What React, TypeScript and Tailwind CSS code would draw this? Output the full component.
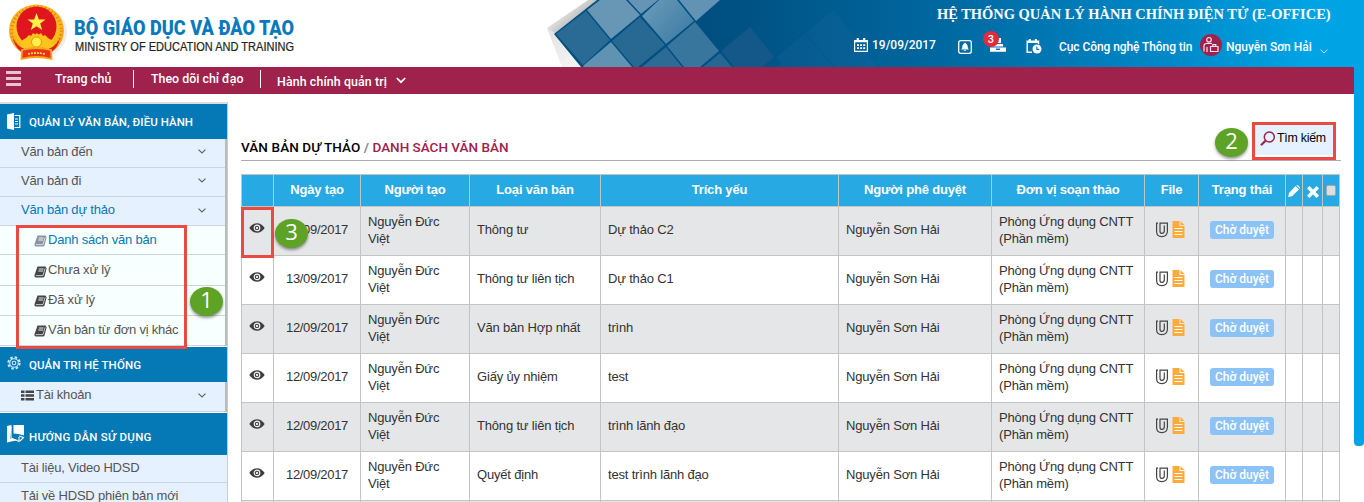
import React from "react";

const sans = "font-['Liberation_Sans',Arial,sans-serif]";
const roboto = "font-['Roboto','Liberation_Sans',sans-serif] font-medium";

function Emblem() {
  return (
    <svg width="58" height="58" viewBox="0 0 58 58" className="shrink-0">
      <defs>
        <radialGradient id="gold" cx="50%" cy="45%" r="60%">
          <stop offset="0.6" stopColor="#fdc51c" />
          <stop offset="1" stopColor="#f39a12" />
        </radialGradient>
      </defs>
      <ellipse cx="30" cy="28" rx="28" ry="26" fill="#d9d9d9" opacity="0.5" />
      <ellipse cx="27.5" cy="26.5" rx="27.5" ry="26" fill="url(#gold)" />
      <ellipse cx="27.5" cy="26.5" rx="24.8" ry="23.6" fill="none" stroke="#ee7d1a" strokeWidth="3" strokeDasharray="1.2 2.6" />
      <circle cx="27.5" cy="22.500" r="20" fill="#e0161f" />
      <path d="M27.500 9 29.800 15.500H36.500L31.200 19.600 33.200 26 27.500 22.200 21.800 26 23.800 19.600 18.500 15.500H25.200Z" fill="#fff04a" />
      <path d="M11 41q1-5 6-7l3-3 2 1 2-3 2.500 1.500 1-1.500 2.500 1.500 2-1.500 2 3 2-1 3 3q5 2 6 7l-7 7H18Z" fill="#fcc41d" />
      <circle cx="27.500" cy="38" r="5" fill="#fff04a" stroke="#f0950f" />
      <path d="M4 34c4 8 9 11 16 12l-1 4C11 49 6 43 4 34Z" fill="#df1f20" />
      <path d="M51 34c-4 8-9 11-16 12l1 4c8-1 13-7 15-16Z" fill="#df1f20" />
      <path d="M13 46q14.500-4 29 0l.5 9q-15-4-30 0Z" fill="#e8331f" stroke="#f8a51a" strokeWidth="1.800" />
      <path d="M19 50q8-2 17 0" stroke="#ffd83a" strokeWidth="1.800" strokeDasharray="2 1" fill="none" />
    </svg>
  );
}

function HeaderArt() {
  return (
    <svg className="absolute left-[547px] top-0" width="817" height="67" viewBox="547 0 817 67">
      <defs>
        <linearGradient id="hb" gradientUnits="userSpaceOnUse" x1="554" y1="0" x2="1364" y2="0">
          <stop offset="0" stopColor="#004f80" />
          <stop offset="0.2" stopColor="#004f80" />
          <stop offset="0.5" stopColor="#006aa3" />
          <stop offset="0.76" stopColor="#0089c8" />
          <stop offset="0.93" stopColor="#00a3e4" />
          <stop offset="1" stopColor="#00a4e6" />
        </linearGradient>
        <linearGradient id="fold" gradientUnits="userSpaceOnUse" x1="558" y1="4" x2="578" y2="28">
          <stop offset="0" stopColor="#fff" />
          <stop offset="1" stopColor="#a9a9a9" />
        </linearGradient>
        <linearGradient id="fold2" gradientUnits="userSpaceOnUse" x1="550" y1="30" x2="578" y2="67">
          <stop offset="0" stopColor="#e2e2e2" />
          <stop offset="1" stopColor="#f6f6f6" />
        </linearGradient>
        <linearGradient id="sq" gradientUnits="userSpaceOnUse" x1="645" y1="5" x2="690" y2="45">
          <stop offset="0" stopColor="#6898b7" />
          <stop offset="1" stopColor="#397aa3" />
        </linearGradient>
      </defs>
      <path d="M547 28 588 0H600L554 36Z" fill="url(#fold)" />
      <path d="M547 28 555 33 582 67H562Z" fill="url(#fold2)" />
      <path d="M554 34 597 0H1364V67H581Z" fill="url(#hb)" />
      <path d="M556 34 586 11 610 40 583 65Z" fill="#2a6b96" />
      <path d="M587 10 600 0H626L640 15 611 39Z" fill="#6896b5" />
      <path d="M628 0H658L641 14Z" fill="#6594b4" />
      <path d="M612 41 640 17 665 45 638 67H634Z" fill="#286994" />
      <path d="M584 65 611 42 632 67H583Z" fill="#6092b2" />
      <path d="M642 16 659 0H677L694 21 666 44Z" fill="url(#sq)" />
      <path d="M679 0H720L696 21Z" fill="#6293b4" />
      <path d="M695 22 719 51 700 67H684L667 46Z" fill="#39769e" />
      <path d="M666 47 682 67H642Z" fill="#2c6b95" />
      <path d="M720 53 732 67H703Z" fill="#266692" />
      <path d="M721 51 750 27 774 57 763 67H734Z" fill="#135889" />
      <path d="M776 57 833 9 878 67H784Z" fill="#1a6ba0" opacity="0.22" />
      <path d="M763 67 834 9M805 33 834 67" stroke="#004f84" opacity="0.35" />
    </svg>
  );
}

const EyeIcon = () => (
  <svg width="16" height="10" viewBox="0 0 16 10">
    <path d="M.3 5Q3.500.3 8 .3T15.700 5Q12.500 9.700 8 9.700T.3 5Z" fill="#3d3d3d" />
    <circle cx="8" cy="4.900" r="2.800" fill="none" stroke="#f0f0f0" strokeWidth="1.200" />
    <circle cx="8" cy="4.900" r="1.200" fill="#e8e8e8" />
  </svg>
);

const ClipIcon = () => (
  <svg width="14" height="16" viewBox="0 0 14 16" fill="none" stroke="#444" strokeWidth="1.200">
    <path d="M3 1.200H1.600V9.500Q1.600 14.600 6.800 14.600T12.400 9.500V1.200H5V9.200Q5 11.400 7 11.400T9.300 9.200V3.500" />
  </svg>
);

const FileIcon = () => (
  <svg width="13" height="17" viewBox="0 0 13 17">
    <path d="M.5 0H7.500V5H12.500V17H.5Z" fill="#fdab3c" />
    <path d="M8.500 0 12.500 4H8.500Z" fill="#fdab3c" />
    <path d="M2.500 7.500H10.500M2.500 10.500H10.500M2.500 13.500H10.500" stroke="#fff" strokeWidth="1" />
  </svg>
);

const BookIcon = ({ active }: { active?: boolean }) => (
  <svg width="13" height="12" viewBox="0 0 13 12" className="mt-[3px] shrink-0">
    <path d="M3.500.5H11.500L12.600 2.500 10.500 10.500Q10.200 11.500 9 11.500H2Q.3 11.500.4 9.500Z" fill={active ? "#8a93a0" : "#444"} />
    <path d="M4.800 3H9.600M4.300 5H9.100" stroke="#f7ffff" strokeWidth="0.900" />
    <path d="M1.800 9.600H9L11.200 2.300" stroke="#f7ffff" strokeWidth="0.700" fill="none" />
  </svg>
);

const Chevron = () => (
  <svg width="8" height="5" viewBox="0 0 8 5" fill="none" stroke="#5c6670" strokeWidth="1.200">
    <path d="M.5.6 4 4 7.500.6" />
  </svg>
);

function Badge({ n, className }: { n: string; className: string }) {
  return (
    <div className={`absolute flex h-[29px] w-[33px] items-center justify-center rounded-[50%] bg-[#5ea226] pb-[5px] font-['Open_Sans',sans-serif] text-[22px] leading-none text-white shadow-[0_2px_3px_rgba(0,0,0,0.4)] ${className}`}>
      {n}
    </div>
  );
}

function Header() {
  return (
    <header className="relative flex h-[67px] justify-between">
      <HeaderArt />
      <div className="flex pl-[9px] pt-[4px]">
        <Emblem />
        <svg width="230" height="60" className="ml-[7px] overflow-visible">
          <text x="0" y="30.500" textLength="220" lengthAdjust="spacingAndGlyphs" fill="#0c79bd" className="font-['Roboto',sans-serif] text-[20.5px] font-black">BỘ GIÁO DỤC VÀ ĐÀO TẠO</text>
          <text x="1" y="46.500" textLength="219" lengthAdjust="spacingAndGlyphs" fill="#222" stroke="#222" strokeWidth="0.2" className="font-['Liberation_Sans',sans-serif] text-[12px]">MINISTRY OF EDUCATION AND TRAINING</text>
        </svg>
      </div>
      <div className="relative w-[510px] text-white">
        <div className="ml-[83px] mt-[5px] h-[18px] whitespace-nowrap font-['Liberation_Serif','Times_New_Roman',serif] text-[14.45px] font-bold leading-[18px]">HỆ THỐNG QUẢN LÝ HÀNH CHÍNH ĐIỆN TỬ (E-OFFICE)</div>
        <div className={`mt-[8px] flex h-[28px] items-center whitespace-nowrap text-[12px] leading-[28px] ${roboto}`}>
          <svg width="14" height="14" viewBox="0 0 14 14" fill="none" stroke="#fff">
            <path d="M.6 2.500H13.400V13.400H.6Z" strokeWidth="1.200" />
            <path d="M.6 3.200H13.400M3.800 0V3M10.200 0V3" strokeWidth="2.200" />
            <path d="M3 7.200H11.400M3 10.200H11.400" strokeWidth="1.800" strokeDasharray="2 1.100" />
          </svg>
          <span className="ml-[4px] w-[86px]">19/09/2017</span>
          <svg width="14" height="14" viewBox="0 0 14 14" className="mt-[4px]">
            <rect x=".7" y=".7" width="12.600" height="12.600" rx="2" fill="none" stroke="#fff" strokeWidth="1.300" />
            <path d="M7 2.500 8 3.500Q9.800 4.500 9.800 7V8L11 9.500H3L4.200 8V7Q4.200 4.500 6 3.500ZM5.800 10.200H8.200V11H5.800Z" fill="#fff" />
          </svg>
          <div className="relative ml-[17px] h-[14px] w-[18px]">
            <svg width="18" height="14" viewBox="0 0 18 14" fill="#fff">
              <path d="M5 0H12V5H5ZM3 6H14V8.500H3ZM1 9.500H17V13.700H1Z" />
              <path d="M7 10.500H11V12H7Z" fill="#0878b5" />
            </svg>
            <span className="absolute -left-[6px] -top-[7px] flex h-4 w-4 items-center justify-center rounded-full bg-[#e02a3e] text-[11px] leading-none">3</span>
          </div>
          <svg width="16" height="15" viewBox="0 0 16 15" className="ml-[19px] mt-[3px]" fill="none" stroke="#fff">
            <path d="M6 13.200H1.200V2.200H12.500V5" strokeWidth="1.400" />
            <path d="M1 3H12.500M3.800 0V3M9.800 0V3" strokeWidth="2" />
            <circle cx="11" cy="10" r="4.500" fill="#fff" stroke="none" />
            <path d="M10.800 7.500V10.300H13.200" stroke="#0a7fc0" strokeWidth="1.200" />
          </svg>
          <span className="ml-[17px] w-[141px] pt-[3px] tracking-[-0.08px]">Cục Công nghệ Thông tin</span>
          <svg width="22" height="22" viewBox="0 0 22 22" fill="none" stroke="#fbe3ec" strokeWidth="1.200">
            <circle cx="11" cy="11" r="11" fill="#9e224c" stroke="none" />
            <circle cx="9" cy="5.800" r="2.300" />
            <path d="M4 17.500V12Q4 9.500 6.500 9.500H12M7 13V18M10.500 12.500H18V17.500H10.500ZM12.800 12.300V10.700H15.800V12.300" />
          </svg>
          <span className="ml-[4px] w-[94px] pt-[3px]">Nguyễn Sơn Hải</span>
          <svg width="8" height="5" viewBox="0 0 8 5" className="mt-[13px]" fill="none" stroke="#b9e2f6"><path d="M.5.6 4 4 7.500.6" /></svg>
        </div>
      </div>
    </header>
  );
}

function Nav() {
  return (
    <nav className={`flex h-[27px] w-[1354px] whitespace-nowrap bg-[#9e224c] text-[12.4px] leading-[16px] text-white ${roboto}`}>
      <div className="ml-[6px] mt-[4px] flex w-[15px] flex-col gap-[3px]">
        <i className="h-[3px] bg-[#e8c3d1]" />
        <i className="h-[3px] bg-[#e8c3d1]" />
        <i className="h-[3px] bg-[#e8c3d1]" />
      </div>
      <span className="ml-[34px] mt-[4px] w-[78px] tracking-[0.15px]">Trang chủ</span>
      <i className="mt-[3px] h-[18px] w-px bg-white" />
      <span className="ml-[17px] mt-[4px] w-[109px]">Theo dõi chỉ đạo</span>
      <i className="mt-[3px] h-[18px] w-px bg-white" />
      <span className="ml-[16px] mt-[7px] w-[119px] tracking-[0.1px]">Hành chính quản trị</span>
      <svg width="10" height="7" viewBox="0 0 10 7" className="mt-[10px]" fill="none" stroke="#fff" strokeWidth="1.700"><path d="M.8 1 5 5.200 9.200 1" /></svg>
    </nav>
  );
}

function SideHead({ icon, className, children }: { icon: React.ReactNode; className: string; children: React.ReactNode }) {
  return (
    <div className={`flex items-center bg-[#0578b6] pl-[7px] text-[11.5px] text-white ${roboto} ${className}`}>
      <span className="w-[22px]">{icon}</span>
      <span className="whitespace-nowrap">{children}</span>
    </div>
  );
}

function SideItem({ children, active, arrow, icon, className }: { children: React.ReactNode; active?: boolean; arrow?: boolean; icon?: React.ReactNode; className: string }) {
  return (
    <div className={`flex items-center justify-between border-b border-[#ccd4dc] bg-[#e5f1ff] pl-[21px] pr-[19px] ${active ? "text-[#0578b6]" : "text-[#555]"} ${className}`}>
      <span className="flex items-center gap-[2px]">{icon}{children}</span>
      {arrow && <Chevron />}
    </div>
  );
}

function SubItem({ children, active, className }: { children: React.ReactNode; active?: boolean; className: string }) {
  return (
    <div className={`flex items-center border-b border-[#ccd4dc] bg-[#f7ffff] pl-[34px] ${active ? "text-[#0578b6]" : "text-[#555]"} ${className}`}>
      <BookIcon active={active} />
      <span className="ml-px whitespace-nowrap">{children}</span>
    </div>
  );
}

function Sidebar() {
  return (
    <aside className={`h-[400px] w-[228px] shrink-0 overflow-hidden border-r border-[#ccc] text-[13px] leading-[16px] tracking-[-0.21px] ${sans}`}>
      <div className="h-[2px] bg-[#ddd]" />
      <SideHead className="h-[35px] tracking-[0.05px]" icon={
        <svg width="14" height="17" viewBox="0 0 14 17">
          <path d="M0 1.500 7 0V17L0 15.500Z" fill="#fff" />
          <path d="M7.500 2.500H12.800V14.500H7.500M8 6H11M8 8.500H11M8 11H11" fill="none" stroke="#fff" strokeWidth="1.200" />
        </svg>}>QUẢN LÝ VĂN BẢN, ĐIỀU HÀNH</SideHead>
      <div className="border-r-2 border-[#bbb]">
        <SideItem arrow className="h-[29px] pb-[3px]">Văn bản đến</SideItem>
        <SideItem arrow className="h-[29px] pb-[3px]">Văn bản đi</SideItem>
        <SideItem arrow active className="h-[29px] pb-[2px]">Văn bản dự thảo</SideItem>
        <SubItem active className="h-[29px] pb-px">Danh sách văn bản</SubItem>
        <SubItem className="h-[31px]">Chưa xử lý</SubItem>
        <SubItem className="h-[30px] pb-[2px]">Đã xử lý</SubItem>
        <SubItem className="h-[30px] pb-[2px]">Văn bản từ đơn vị khác</SubItem>
      </div>
      <div className="h-px bg-white" />
      <SideHead className="h-[35px] tracking-[0.1px]" icon={
        <svg width="14" height="14" viewBox="0 0 14 14" fill="none" stroke="#cfe6f4" className="-mt-[3px]">
          <circle cx="7" cy="7" r="5.700" strokeWidth="2" strokeDasharray="2.500 1.980" />
          <circle cx="7" cy="7" r="4.300" strokeWidth="1.100" />
          <circle cx="7" cy="7" r="1.800" strokeWidth="1.100" />
        </svg>}>QUẢN TRỊ HỆ THỐNG</SideHead>
      <div className="border-r-2 border-[#bbb]">
        <SideItem arrow className="h-[30px] pb-[3px]" icon={
          <svg width="13" height="11" viewBox="0 0 13 11" fill="#444"><path d="M0 .5H3.500V3H0ZM4.500.5H13V3H4.500ZM0 4.300H3.500V6.800H0ZM4.500 4.300H13V6.800H4.500ZM0 8.100H3.500V10.600H0ZM4.500 8.100H13V10.600H4.500Z" /></svg>}>Tài khoản</SideItem>
      </div>
      <div className="h-px bg-white" />
      <SideHead className="h-[42px] pt-[5px] tracking-[0.27px]" icon={
        <svg width="18" height="18" viewBox="0 0 18 18" className="-mt-[5px]">
          <path d="M0 1 4.500 0V3L3 13.500 11 15 0 17.500Z" fill="#fff" />
          <path d="M6.500 0H17V10.500L11.500 9 6.500 8.500Z" fill="#fff" />
          <path d="M4 2V13L12 16.500V12M12 11 16.500 12.500 13 16" stroke="#fff" strokeWidth="1.100" fill="none" />
        </svg>}>HƯỚNG DẪN SỬ DỤNG</SideHead>
      <SideItem className="h-[28px] pb-[2px]">Tài liệu, Video HDSD</SideItem>
      <SideItem className="h-[28px] pb-[2px]">Tải về HDSD phiên bản mới</SideItem>
    </aside>
  );
}

const rows = [
  ["12/09/2017", "Thông tư", "Dự thảo C2"],
  ["13/09/2017", "Thông tư liên tịch", "Dự thảo C1"],
  ["12/09/2017", "Văn bản Hợp nhất", "trình"],
  ["12/09/2017", "Giấy ủy nhiệm", "test"],
  ["12/09/2017", "Thông tư liên tịch", "trình lãnh đạo"],
  ["12/09/2017", "Quyết định", "test trình lãnh đạo"],
  ["", "", ""],
];

const cols = "grid grid-cols-[32px_87px_109px_131px_238px_153px_153px_54px_87px_17px_20px_17px]";
const cell = "flex items-center border-b border-r border-[#c4c4c4]";

function Table() {
  return (
    <div className={`w-[1099px] border-l border-t border-[#c4c4c4] text-[13px] leading-[17px] tracking-[-0.18px] text-[#333] ${sans}`}>
      <div className={`${cols} h-[32px] bg-[#27a9e3] font-bold text-white`}>
        {["", "Ngày tạo", "Người tạo", "Loại văn bản", "Trích yếu", "Người phê duyệt", "Đơn vị soạn thảo", "File", "Trạng thái"].map((h, i) => (
          <div key={i} className={`${cell} justify-center whitespace-nowrap pb-[2px]`}>{h}</div>
        ))}
        <div className={`${cell} justify-center`}>
          <svg width="12" height="12" viewBox="0 0 12 12" fill="#fff"><path d="M7.500 1 11 4.500 4 11.200.2 11.900 1 8ZM8.300.3Q9.300-.4 10.300.6L11.400 1.700Q12.400 2.700 11.600 3.700Z" /></svg>
        </div>
        <div className={`${cell} justify-center`}>
          <svg width="12" height="12" viewBox="0 0 12 12" className="mt-[3px]" stroke="#fff" strokeWidth="3.400"><path d="M1.200 1.200 10.800 10.800M10.800 1.200 1.200 10.800" /></svg>
        </div>
        <div className={`${cell} justify-center`}>
          <i className="h-[11px] w-[10px] rounded-[2px] border border-[#a8a8a8] bg-[#dedede]" />
        </div>
      </div>
      {rows.map(([date, kind, summary], i) => (
        <div key={i} className={`${cols} h-[49px] ${i % 2 ? "bg-white" : "bg-[#e5e6e7]"}`}>
          <div className={`${cell} justify-center pb-[6px] pr-px`}>{date && <EyeIcon />}</div>
          <div className={`${cell} justify-center pb-[3px] tracking-[-0.3px]`}>{date}</div>
          <div className={`${cell} px-[7px] pb-[3px]`}>{date && <span>Nguyễn Đức<br />Việt</span>}</div>
          <div className={`${cell} px-[7px] pb-[3px]`}>{kind}</div>
          <div className={`${cell} px-[7px] pb-[3px]`}>{summary}</div>
          <div className={`${cell} px-[7px] pb-[3px]`}>{date && "Nguyễn Sơn Hải"}</div>
          <div className={`${cell} whitespace-nowrap px-[7px] pb-[3px]`}>{date && <span>Phòng Ứng dụng CNTT<br />(Phần mềm)</span>}</div>
          <div className={`${cell} gap-[3px] pb-[3px] pl-[10px]`}>{date && <><ClipIcon /><FileIcon /></>}</div>
          <div className={`${cell} justify-center pb-[2px]`}>
            {date && <span className={`flex h-[18px] w-[64px] items-center justify-center whitespace-nowrap rounded-[3px] bg-[#8bc3f7] text-[12px] tracking-normal text-white ${roboto}`}>Chờ duyệt</span>}
          </div>
          <div className={cell} />
          <div className={cell} />
          <div className={cell} />
        </div>
      ))}
    </div>
  );
}

export default function App() {
  return (
    <div className="relative h-[502px] w-[1364px] overflow-hidden bg-white">
      <Header />
      <Nav />
      <div className="flex pt-[8px]">
        <Sidebar />
        <main className="min-w-0 flex-1 pl-[13px] pt-[19px]">
          <div className="flex h-[40px] w-[1100px] items-start justify-between border-b border-[#adadad]">
            <h1 className={`mt-[17px] whitespace-nowrap text-[13.5px] leading-[18px] text-[#777] ${roboto}`}>
              <span className="tracking-[0.1px] text-black">VĂN BẢN DỰ THẢO</span> / <span className="text-[#9e224c]">DANH SÁCH VĂN BẢN</span>
            </h1>
            <div className={`mr-[5px] mt-px flex h-[38px] w-[84px] border-[3px] border-[#ea4a42] ${sans}`}>
              <div className="flex h-[30px] flex-1 bg-[#e5f1ff] pl-[5px] pt-[5px] text-[12.4px] leading-[16px] tracking-[-0.25px] text-black">
                <svg width="16" height="16" viewBox="0 0 16 16" className="mt-px shrink-0" fill="none" stroke="#9e224c">
                  <circle cx="9.300" cy="6" r="5" strokeWidth="1.500" />
                  <path d="M5.500 9.800 1 14.200" strokeWidth="2.200" />
                </svg>
                <span className="ml-[1px] whitespace-nowrap">Tìm kiếm</span>
              </div>
            </div>
          </div>
          <div className="h-[13px]" />
          <Table />
        </main>
      </div>

      <div className="absolute left-[1354px] top-[67px] h-[379px] w-[10px] rounded-b-[4px] bg-[#00a4e6]" />
      <div className="absolute left-[16px] top-[225px] h-[124px] w-[171px] border-[3px] border-[#ea4a42]" />
      <div className="absolute left-[241px] top-[207px] h-[51px] w-[33px] border-[3px] border-[#ea4a42]" />
      <Badge n="1" className="left-[190px] top-[287px]" />
      <Badge n="2" className="left-[1215px] top-[128px]" />
      <Badge n="3" className="left-[275px] top-[219px]" />
    </div>
  );
}
